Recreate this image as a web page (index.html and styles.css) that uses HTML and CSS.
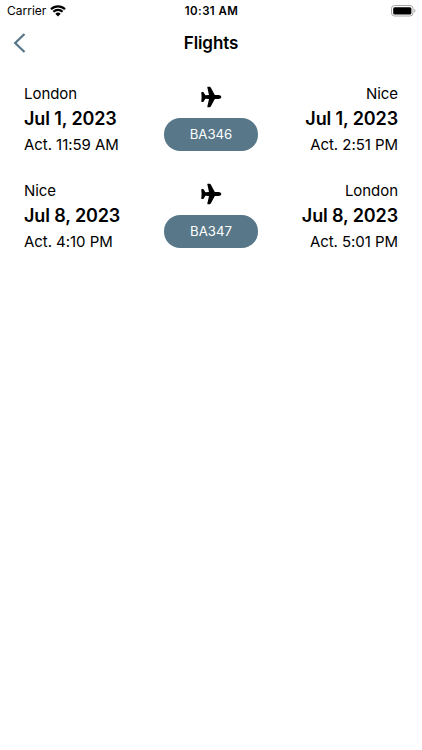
FILE: index.html
```html
<!DOCTYPE html>
<html lang="en">
<head>
<meta charset="utf-8">
<title>Flights</title>
<link rel="stylesheet" href="styles.css">
</head>
<body>
<svg class="defs" width="0" height="0"><symbol id="plane" viewBox="0 0 22 22"><path d="M21.300 11c0-1.300-1.400-2-2.800-2h-3.700L10.900 1.700C10.500.9 10 .7 9.400.7H8c-.6 0-.8.4-.6 1l1.600 7.300-3.600.2-1.700-2.600c-.3-.5-.6-.6-1-.6h-.8c-.5 0-.7.3-.6.800l.3 4.200-.3 4.200c-.1.500.1.800.6.800h.8c.4 0 .7-.1 1-.6l1.700-2.600 3.600.2-1.600 7.300c-.2.600 0 1 .6 1h1.400c.6 0 1.100-.2 1.500-1l3.900-7.300h3.700c1.400 0 2.800-.7 2.800-2z"/></symbol></svg>
<div class="status">
  <div class="carrier"><span>Carrier</span>
    <svg class="wifi" viewBox="0 0 16 12"><path d="M1 4.300a10 10 0 0 1 14 0M3.400 6.800a6.500 6.500 0 0 1 9.200 0"/><path class="dot" d="M5.300 8.700a3.900 3.900 0 0 1 5.400 0L8 11.500z"/></svg>
  </div>
  <div class="time">10:31 AM</div>
  <svg class="battery" viewBox="0 0 26 12"><rect class="shell" x="1.500" y=".5" width="21.500" height="10.500" rx="3"/><rect x="3.200" y="2.200" width="18.200" height="7.200" rx="1.500"/><path class="cap" d="M24.300 4v3.600c1.500-.7 1.500-2.900 0-3.600z"/></svg>
</div>
<header class="nav"><svg class="back" viewBox="0 0 14 20"><path d="M12.500 1 3.200 10l9.300 9"/></svg><h1>Flights</h1></header>
<main>
  <section class="flight">
    <div class="place"><p>London</p><strong>Jul 1, 2023</strong><p>Act. 11:59 AM</p></div>
    <div class="route"><svg class="plane"><use href="#plane"/></svg><span class="pill">BA346</span></div>
    <div class="place end"><p>Nice</p><strong>Jul 1, 2023</strong><p>Act. 2:51 PM</p></div>
  </section>
  <section class="flight">
    <div class="place"><p>Nice</p><strong>Jul 8, 2023</strong><p>Act. 4:10 PM</p></div>
    <div class="route"><svg class="plane"><use href="#plane"/></svg><span class="pill">BA347</span></div>
    <div class="place end"><p>London</p><strong>Jul 8, 2023</strong><p>Act. 5:01 PM</p></div>
  </section>
</main>
</body>
</html>
```
FILE: styles.css
```css
* { box-sizing: border-box; }
body { margin: 0; background: #fff; color: #000; font-family: Inter, sans-serif; }
.defs { position: absolute; }
.status { height: 22px; padding: 0 6px 0 7px; display: grid; grid-template-columns: 1fr auto 1fr; align-items: center; font-size: 12px; }
.carrier { display: flex; align-items: center; gap: 4px; }
.carrier span { line-height: 14px; }
.wifi { width: 16px; height: 12px; margin-top: -1px; fill: none; stroke: #000; stroke-width: 2.200; }
.wifi .dot { fill: #000; stroke: none; }
.time { font-weight: 600; font-size: 11.500px; letter-spacing: .4px; }
.battery { width: 26px; height: 12px; justify-self: end; margin-top: -1px; }
.shell { fill: none; stroke: #a6a6a6; }
.cap { fill: #999; }
.nav { height: 43px; display: grid; grid-template-columns: 1fr auto 1fr; align-items: center; padding: 0 12px; }
.back { width: 14px; height: 20px; margin-top: -1px; fill: none; stroke: #587889; stroke-width: 2.300; }
h1 { margin: -1px 0 0; font-size: 17px; line-height: 22px; font-weight: 600; letter-spacing: -.1px; }
main { padding: 16px 24px; }
.flight { display: grid; grid-template-columns: 1fr 94px 1fr; height: 97.300px; }
p { margin: 0; font-size: 15px; line-height: 25px; letter-spacing: -.05px; white-space: nowrap; }
strong { display: block; font-size: 18px; line-height: 25px; font-weight: 600; letter-spacing: -.12px; white-space: nowrap; }
strong + p { line-height: 27px; }
.end { text-align: right; }
.route { display: flex; flex-direction: column; align-items: center; padding-top: 5px; }
.plane { width: 22px; height: 22px; }
.pill { margin-top: 10px; width: 94px; height: 32.500px; border-radius: 16.250px; background: #587889; color: #fff; font-size: 13.200px; line-height: 32px; text-align: center; }
```
